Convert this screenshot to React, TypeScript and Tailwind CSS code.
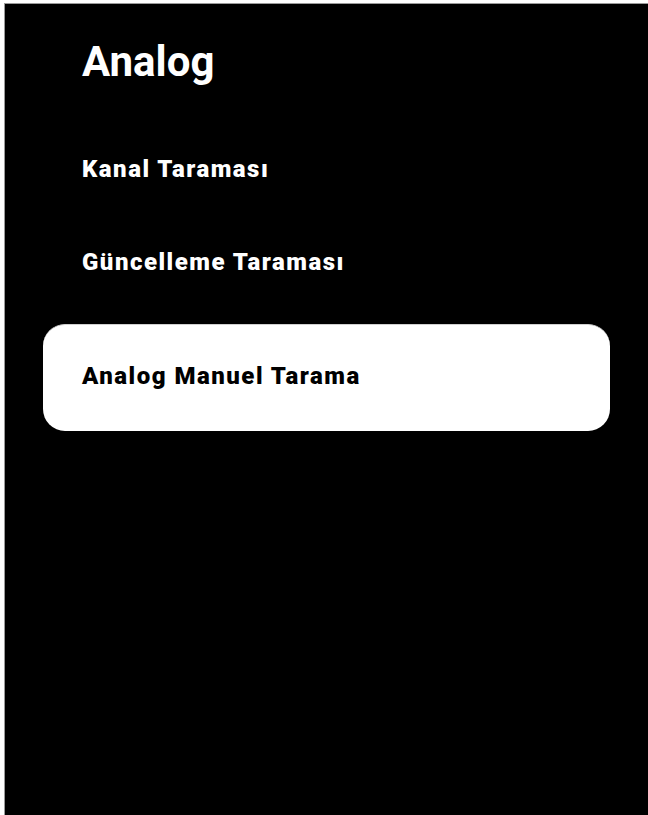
const items = ['Kanal Taraması', 'Güncelleme Taraması'];

export default function App() {
  return (
    <div className="w-[648px] h-[815px] overflow-hidden bg-white pl-[4px] pt-[3px] font-['Roboto',sans-serif]">
      <div className="h-full bg-black border-l border-t border-[#9a9a9a]">
        <h1 className="pt-[34px] pl-[77px] text-[42px] leading-[48px] font-bold text-white">Analog</h1>

        <ul className="mt-[68px] flex flex-col">
          {items.map((item, i) => (
            <li
              key={item}
              className={`pl-[77px] text-[24px] leading-[30px] tracking-[1.5px] font-black text-white ${i > 0 ? 'mt-[63px]' : ''}`}
            >
              {item}
            </li>
          ))}
          <li className="mt-[47px] ml-[38px] mr-[38px] h-[107px] flex items-center rounded-[22px] border-t border-[#d0d0d0] bg-white pl-[39px] pb-[4px] text-[24px] leading-[30px] tracking-[1.5px] font-black text-black">
            Analog Manuel Tarama
          </li>
        </ul>
      </div>
    </div>
  );
}
